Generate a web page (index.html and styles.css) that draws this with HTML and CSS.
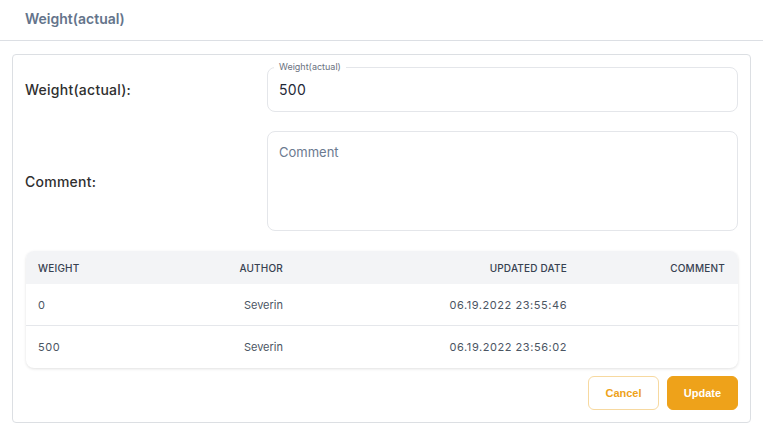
FILE: index.html
```html
<!DOCTYPE html>
<html>
<head>
<meta charset="utf-8">
<link rel="stylesheet" href="styles.css">
</head>
<body>
<header class="page-header">Weight(actual)</header>
<div class="card">
  <div class="form-row row-weight">
    <div class="label">Weight(actual):</div>
    <div class="outlined">
      <span class="float-label">Weight(actual)</span>
      <div class="value">500</div>
    </div>
  </div>
  <div class="form-row row-comment">
    <div class="label">Comment:</div>
    <div class="textarea"><span class="placeholder">Comment</span></div>
  </div>
  <div class="table">
    <div class="tr th">
      <div class="c1">WEIGHT</div>
      <div class="c2">AUTHOR</div>
      <div class="c3">UPDATED DATE</div>
      <div class="c4">COMMENT</div>
    </div>
    <div class="tr td">
      <div class="c1">0</div>
      <div class="c2">Severin</div>
      <div class="c3">06.19.2022 23:55:46</div>
      <div class="c4"></div>
    </div>
    <div class="tr td last">
      <div class="c1">500</div>
      <div class="c2">Severin</div>
      <div class="c3">06.19.2022 23:56:02</div>
      <div class="c4"></div>
    </div>
  </div>
  <div class="actions">
    <button class="btn btn-cancel">Cancel</button>
    <button class="btn btn-update">Update</button>
  </div>
</div>
</body>
</html>
```
FILE: styles.css
```css
* { box-sizing: border-box; }
body {
  margin: 0;
  font-family: Inter, "Noto Sans", sans-serif;
  background: #fff;
  color: #2d2d2d;
}
.page-header {
  height: 41px;
  border-bottom: 1px solid #dcdfe4;
  padding-left: 25px;
  display: flex;
  align-items: center;
  font-size: 14px;
  font-weight: 600;
  color: #64748b;
  padding-bottom: 4px;
}
.card {
  margin: 13px 12px 11px 12px;
  border: 1px solid #dcdfe3;
  border-radius: 4px;
  padding: 12px 12px 12px 12px;
}
.form-row {
  display: grid;
  grid-template-columns: 242px 1fr;
  align-items: center;
}
.label {
  font-size: 14px;
  font-weight: 500;
  color: #2f2f2f;
  letter-spacing: 0.25px;
}
.row-weight { margin-bottom: 19px; }
.row-comment { margin-bottom: 20px; }
.outlined {
  position: relative;
  height: 45px;
  border: 1px solid #e4e6ea;
  border-radius: 8px;
  display: flex;
  align-items: center;
  padding-left: 11px;
}
.float-label {
  position: absolute;
  top: -7px;
  left: 6px;
  padding: 0 5px;
  background: #fff;
  font-size: 9px;
  line-height: 12px;
  color: #6b7280;
}
.value {
  font-size: 14px;
  color: #1f2937;
  font-weight: 400;
  letter-spacing: 0.3px;
}
.textarea {
  height: 100px;
  border: 1px solid #e4e6ea;
  border-radius: 8px;
  padding: 9px 11px;
}
.placeholder {
  font-size: 13px;
  color: #6b7a90;
}
.table {
  margin-left: 1px;
  border-radius: 8px;
  overflow: hidden;
  box-shadow: 0 1px 3px rgba(0, 0, 0, 0.12);
}
.tr {
  display: grid;
  grid-template-columns: 200px 69px 284px 1fr;
  align-items: center;
}
.th {
  height: 33px;
  background: #f3f4f6;
  font-size: 10px;
  font-weight: 500;
  color: #374151;
  letter-spacing: 0.2px;
}
.td {
  height: 42px;
  font-size: 11px;
  color: #4b5563;
  border-bottom: 1px solid #e5e7eb;
  letter-spacing: 0.55px;
}
.td .c2 { letter-spacing: 0; }
.td.last { border-bottom: none; }
.c1 { padding-left: 12px; }
.c2, .c3 { text-align: right; padding-right: 12px; }
.c4 { text-align: right; padding-right: 13px; }
.actions {
  display: flex;
  justify-content: flex-end;
  gap: 8px;
  margin-top: 8px;
}
.btn {
  height: 34px;
  border-radius: 6px;
  font-family: "Liberation Sans", Arial, sans-serif;
  font-weight: 700;
  font-size: 11px;
  cursor: pointer;
}
.btn-cancel {
  width: 71px;
  background: #fff;
  border: 1px solid #f7d9a0;
  color: #eea21a;
}
.btn-update {
  width: 71px;
  background: #eea21a;
  border: 1px solid #eea21a;
  color: #fff;
}
```
